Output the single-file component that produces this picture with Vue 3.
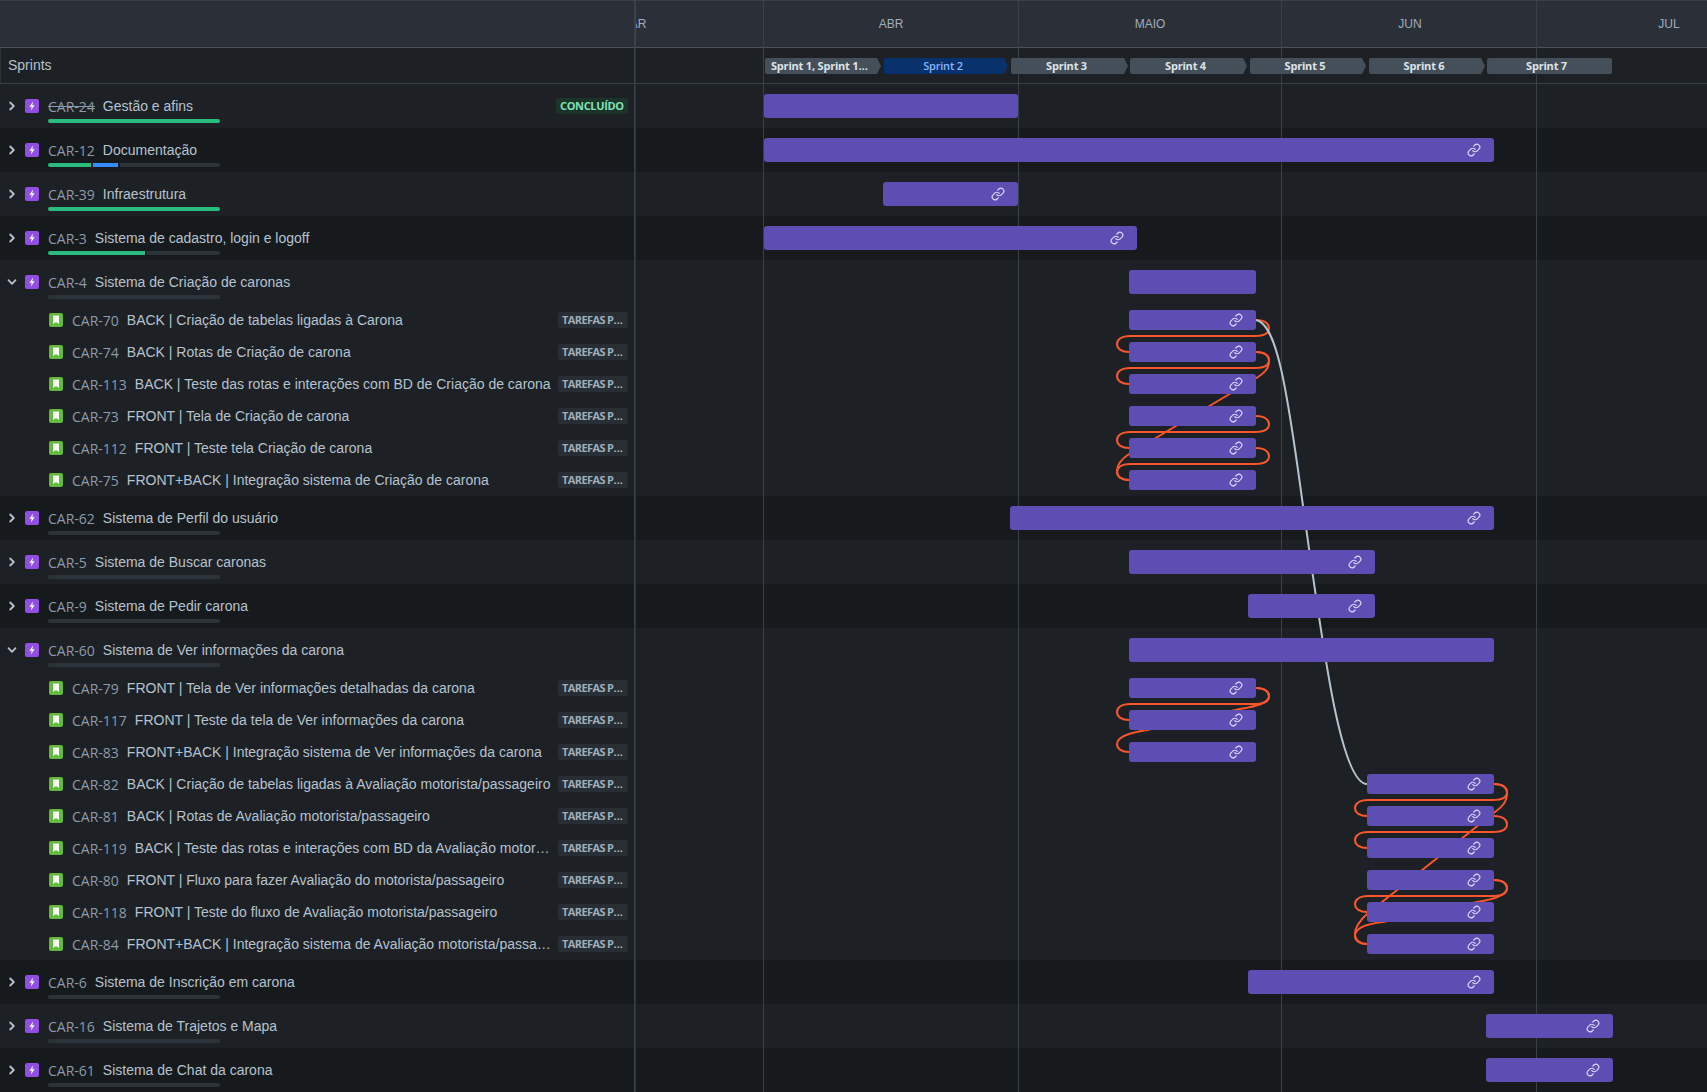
<template>
    <div class="gantt">
        <div class="head-row">
            <div class="left head-left"></div>
            <div class="track">
                <span v-for="m in months" :key="m.name" class="month" :style="place(m.from, m.to)">{{ m.name }}</span>
            </div>
        </div>
        <div class="sprint-row">
            <div class="left sprint-left">Sprints</div>
            <div class="track">
                <span v-for="s in sprints" :key="s.name" class="chip" :class="{ active: s.active, last: s.last }" :style="place(s.from, s.to)">
                    <span class="chip-text">{{ s.name }}</span>
                </span>
            </div>
        </div>

        <div v-for="(e, i) in epics" :key="e.key" class="group" :class="{ odd: i % 2 === 1 }">
            <div class="row epic-row">
                <div class="left epic-left">
                    <svg class="chevron" viewBox="0 0 10 10" width="10" height="10">
                        <path :d="e.children ? 'M1.5 3.2 5 6.8 8.5 3.2' : 'M3.2 1.5 6.8 5 3.2 8.5'" fill="none" stroke="#b6c2cf" stroke-width="1.8" stroke-linecap="round" stroke-linejoin="round" />
                    </svg>
                    <svg class="type-icon" viewBox="0 0 14 14" width="14" height="14">
                        <rect width="14" height="14" rx="2" fill="#904ee2" />
                        <path d="M8.2 2.5 4.3 7.8h2.4l-.9 3.7 3.9-5.2H7.2z" fill="#fff" />
                    </svg>
                    <div class="epic-body">
                        <div class="line">
                            <span class="key" :class="{ done: e.done }">{{ e.key }}</span>
                            <span class="title">{{ e.title }}</span>
                        </div>
                        <div class="progress">
                            <span v-if="e.green" class="seg green" :style="{ width: e.green + 'px' }"></span>
                            <span v-if="e.blue" class="seg blue" :style="{ width: e.blue + 'px' }"></span>
                            <span v-if="!e.full" class="seg rest"></span>
                        </div>
                    </div>
                    <span v-if="e.done" class="lozenge ok">CONCLUÍDO</span>
                </div>
                <div class="track">
                    <div class="bar" :style="place(e.from, e.to)">
                        <svg v-if="e.link" class="link" viewBox="0 0 24 24" width="14" height="14">
                            <path :d="linkA" />
                            <path :d="linkB" />
                        </svg>
                    </div>
                </div>
            </div>
            <div v-for="c in e.children" :key="c.key" class="row child-row">
                <div class="left child-left">
                    <svg class="type-icon" viewBox="0 0 14 14" width="14" height="14">
                        <rect width="14" height="14" rx="2" fill="#63ba3c" />
                        <path d="M4 2.5h6v8.5L7 9 4 11z" fill="#fff" />
                    </svg>
                    <span class="key">{{ c.key }}</span>
                    <span class="title grow">{{ c.title }}</span>
                    <span class="lozenge">TAREFAS PENDENTES</span>
                </div>
                <div class="track">
                    <div class="bar small" :style="place(c.from, c.to)">
                        <svg class="link" viewBox="0 0 24 24" width="14" height="14">
                            <path :d="linkA" />
                            <path :d="linkB" />
                        </svg>
                    </div>
                </div>
            </div>
        </div>

        <div class="grid-lines">
            <i v-for="x in lines" :key="x" class="grid-line" :style="{ left: x + 'px' }"></i>
        </div>
        <svg class="arrows" width="1707" height="1092" viewBox="0 0 1707 1092">
            <path v-for="(d, i) in orange" :key="i" :d="d" class="orange" />
            <path class="gray" d="M1256 320C1276 324 1286 380 1303 506C1322 640 1340 784 1367 784" />
        </svg>
    </div>
</template>

<script setup>
const TRACK_LEFT = 636;

const linkA = 'M10 13a5 5 0 0 0 7.54.54l3-3a5 5 0 0 0-7.07-7.07l-1.72 1.71';
const linkB = 'M14 11a5 5 0 0 0-7.54-.54l-3 3a5 5 0 0 0 7.07 7.07l1.71-1.71';

const lines = [634, 763, 1018, 1281, 1536];

const months = [
    { name: 'MAR', from: 505, to: 761 },
    { name: 'ABR', from: 764, to: 1018 },
    { name: 'MAIO', from: 1019, to: 1281 },
    { name: 'JUN', from: 1284, to: 1536 },
    { name: 'JUL', from: 1536, to: 1802 },
];

const sprints = [
    { name: 'Sprint 1, Sprint 1.5, Sprint 1.6', from: 765, to: 881 },
    { name: 'Sprint 2', from: 884, to: 1008, active: true },
    { name: 'Sprint 3', from: 1011, to: 1128 },
    { name: 'Sprint 4', from: 1130, to: 1247 },
    { name: 'Sprint 5', from: 1250, to: 1366 },
    { name: 'Sprint 6', from: 1369, to: 1485 },
    { name: 'Sprint 7', from: 1487, to: 1612, last: true },
];

const A = { from: 1129, to: 1256 };
const B = { from: 1367, to: 1494 };

const epics = [
    { key: 'CAR-24', title: 'Gestão e afins', done: true, full: true, green: 172, from: 764, to: 1018 },
    { key: 'CAR-12', title: 'Documentação', green: 43, blue: 25, from: 764, to: 1494, link: true },
    { key: 'CAR-39', title: 'Infraestrutura', green: 172, full: true, from: 883, to: 1018, link: true },
    { key: 'CAR-3', title: 'Sistema de cadastro, login e logoff', green: 97, from: 764, to: 1137, link: true },
    {
        key: 'CAR-4', title: 'Sistema de Criação de caronas', from: 1129, to: 1256,
        children: [
            { key: 'CAR-70', title: 'BACK | Criação de tabelas ligadas à Carona', ...A },
            { key: 'CAR-74', title: 'BACK | Rotas de Criação de carona', ...A },
            { key: 'CAR-113', title: 'BACK | Teste das rotas e interações com BD de Criação de carona', ...A },
            { key: 'CAR-73', title: 'FRONT | Tela de Criação de carona', ...A },
            { key: 'CAR-112', title: 'FRONT | Teste tela Criação de carona', ...A },
            { key: 'CAR-75', title: 'FRONT+BACK | Integração sistema de Criação de carona', ...A },
        ],
    },
    { key: 'CAR-62', title: 'Sistema de Perfil do usuário', from: 1010, to: 1494, link: true },
    { key: 'CAR-5', title: 'Sistema de Buscar caronas', from: 1129, to: 1375, link: true },
    { key: 'CAR-9', title: 'Sistema de Pedir carona', from: 1248, to: 1375, link: true },
    {
        key: 'CAR-60', title: 'Sistema de Ver informações da carona', from: 1129, to: 1494,
        children: [
            { key: 'CAR-79', title: 'FRONT | Tela de Ver informações detalhadas da carona', ...A },
            { key: 'CAR-117', title: 'FRONT | Teste da tela de Ver informações da carona', ...A },
            { key: 'CAR-83', title: 'FRONT+BACK | Integração sistema de Ver informações da carona', ...A },
            { key: 'CAR-82', title: 'BACK | Criação de tabelas ligadas à Avaliação motorista/passageiro', ...B },
            { key: 'CAR-81', title: 'BACK | Rotas de Avaliação motorista/passageiro', ...B },
            { key: 'CAR-119', title: 'BACK | Teste das rotas e interações com BD da Avaliação motorista/passageiro', ...B },
            { key: 'CAR-80', title: 'FRONT | Fluxo para fazer Avaliação do motorista/passageiro', ...B },
            { key: 'CAR-118', title: 'FRONT | Teste do fluxo de Avaliação motorista/passageiro', ...B },
            { key: 'CAR-84', title: 'FRONT+BACK | Integração sistema de Avaliação motorista/passageiro', ...B },
        ],
    },
    { key: 'CAR-6', title: 'Sistema de Inscrição em carona', from: 1248, to: 1494, link: true },
    { key: 'CAR-16', title: 'Sistema de Trajetos e Mapa', from: 1486, to: 1613, link: true },
    { key: 'CAR-61', title: 'Sistema de Chat da carona', from: 1486, to: 1613, link: true },
];

// loop from the end of one bar back round to the start of the next one
function loop(right, left, y) {
    const r = right + 13;
    const l = left - 12;
    return `M${right} ${y}C${right + 9} ${y} ${r} ${y + 4} ${r} ${y + 8}C${r} ${y + 13} ${r - 5} ${y + 16} ${right - 1} ${y + 16}` +
        `L${left + 1} ${y + 16}C${l + 4} ${y + 16} ${l} ${y + 20} ${l} ${y + 24}C${l} ${y + 29} ${l + 5} ${y + 32} ${left} ${y + 32}`;
}

const orange = [
    loop(1256, 1129, 320),
    loop(1256, 1129, 352),
    loop(1256, 1129, 416),
    loop(1256, 1129, 448),
    loop(1256, 1129, 688),
    loop(1494, 1367, 784),
    loop(1494, 1367, 816),
    loop(1494, 1367, 880),
    'M1256 352C1265 352 1269 356 1269 361C1269 369 1264 373 1258 377L1129 454C1120 460 1117 466 1117 471C1117 477 1122 480 1129 480',
    'M1256 688C1265 688 1269 692 1269 696C1269 704 1252 707 1240 709L1147 730C1127 733 1117 738 1117 744C1117 749 1122 752 1129 752',
    'M1494 784C1503 784 1507 788 1507 793C1507 802 1502 807 1495 812L1367 914C1360 920 1355 928 1355 934C1355 940 1360 944 1367 944',
    'M1494 880C1503 880 1507 884 1507 888C1507 896 1490 900 1477 902L1383 922C1365 924 1355 928 1355 936C1355 941 1360 944 1367 944',
];

function place(from, to) {
    return { left: from - TRACK_LEFT + 'px', width: to - from + 'px' };
}
</script>

<style>
html, body {
    background: #1d2125;
}
</style>

<style scoped>
.gantt {
    position: relative;
    width: 1707px;
    height: 1092px;
    overflow: hidden;
    background: #1d2125;
    font-family: "Liberation Sans", Arial, sans-serif;
    font-size: 14px;
    color: #b6c2cf;
    box-shadow: inset 1px 0 #2c333a;
}

.head-row,
.sprint-row,
.row {
    display: flex;
}

.head-row {
    height: 48px;
    box-sizing: border-box;
    background: #2b3038;
    border-top: 1px solid #38414a;
    border-bottom: 1px solid #4a525b;
}

.sprint-row {
    height: 36px;
    box-sizing: border-box;
    border-bottom: 1px solid #38414a;
}

.left {
    flex: none;
    width: 636px;
    box-sizing: border-box;
    border-right: 2px solid #2c333a;
    display: flex;
    align-items: center;
    min-width: 0;
}

.head-left {
    border-right-color: #3c444d;
}

.sprint-left {
    padding: 0 0 2px 8px;
    color: #b6c2cf;
}

.track {
    position: relative;
    flex: 1;
    overflow: hidden;
}

.month {
    position: absolute;
    top: 0;
    height: 46px;
    line-height: 46px;
    text-align: center;
    font-size: 12px;
    color: #9fadbc;
}

.chip {
    position: absolute;
    z-index: 2;
    top: 10px;
    height: 16px;
    box-sizing: border-box;
    padding: 0 12px 0 6px;
    background: #454f59;
    color: #dee4ea;
    font-family: "Open Sans", sans-serif;
    font-size: 11px;
    font-weight: 700;
    letter-spacing: -0.2px;
    line-height: 16px;
    text-align: center;
    clip-path: polygon(0 0, calc(100% - 4px) 0, 100% 50%, calc(100% - 4px) 100%, 0 100%);
    border-radius: 2px;
}

.chip.last {
    clip-path: none;
}

.chip.active {
    background: #09326c;
    color: #85b8ff;
    font-weight: 600;
}

.chip-text {
    display: block;
    overflow: hidden;
    white-space: nowrap;
    text-overflow: ellipsis;
}

.group {
    background: #1d2125;
}

.group.odd {
    background: #161a1d;
}

.epic-row {
    height: 44px;
}

.child-row {
    height: 32px;
}

.epic-left {
    align-items: flex-start;
    padding-top: 15px;
    padding-right: 6px;
}

.chevron {
    flex: none;
    margin: 2px 8px 0 7px;
}

.epic-left .type-icon {
    margin-right: 9px;
}

.epic-body {
    flex: 1;
    min-width: 0;
}

.line {
    display: flex;
    align-items: center;
    height: 14px;
    gap: 8px;
    white-space: nowrap;
}

.key {
    flex: none;
    color: #8c9bab;
    font-family: "Open Sans", sans-serif;
    font-size: 14px;
}

.key.done {
    text-decoration: line-through;
}

.title {
    color: #b6c2cf;
}

.grow {
    flex: 1;
    min-width: 0;
    overflow: hidden;
    white-space: nowrap;
    text-overflow: ellipsis;
}

.progress {
    display: flex;
    gap: 2px;
    width: 172px;
    height: 4px;
    margin-top: 6px;
}

.seg {
    flex: none;
    height: 4px;
}

.seg:first-child {
    border-radius: 2px 0 0 2px;
}

.seg:last-child {
    border-radius: 0 2px 2px 0;
}

.seg:only-child {
    border-radius: 2px;
}

.green {
    background: #2abb7f;
}

.blue {
    background: #388bff;
}

.rest {
    flex: 1;
    background: #2c333a;
}

.child-left {
    padding: 0 6px 0 49px;
    gap: 8px;
}

.child-left .type-icon {
    margin-right: 1px;
}

.lozenge {
    flex: none;
    width: 70px;
    height: 16px;
    box-sizing: border-box;
    padding: 0 3px 0 4px;
    border-radius: 3px;
    background: #282e33;
    color: #9fadbc;
    font-family: "Open Sans", sans-serif;
    font-size: 11px;
    font-weight: 700;
    letter-spacing: -0.6px;
    line-height: 16px;
    overflow: hidden;
    white-space: nowrap;
    text-overflow: ellipsis;
}

.child-left .lozenge {
    margin-left: -2px;
}

.lozenge.ok {
    width: 72px;
    letter-spacing: -0.35px;
    margin-top: -1px;
    background: #1c3329;
    color: #7ee2b8;
}

.bar {
    position: absolute;
    z-index: 2;
    top: 10px;
    height: 24px;
    display: flex;
    align-items: center;
    justify-content: flex-end;
    padding-right: 13px;
    box-sizing: border-box;
    border-radius: 3px;
    background: #5e4db2;
}

.bar.small {
    top: 6px;
    height: 20px;
}

.link {
    fill: none;
    stroke: #dfd8fd;
    stroke-width: 2;
    stroke-linecap: round;
    stroke-linejoin: round;
}

.grid-lines {
    position: absolute;
    inset: 0;
    pointer-events: none;
}

.grid-line {
    position: absolute;
    top: 0;
    bottom: 0;
    width: 1px;
    background: #38414a;
}

.arrows {
    position: absolute;
    top: 0;
    left: 0;
    pointer-events: none;
}

.arrows path {
    fill: none;
    stroke-width: 2;
}

.orange {
    stroke: #f9562b;
}

.gray {
    stroke: #b6c2cf;
}
</style>
